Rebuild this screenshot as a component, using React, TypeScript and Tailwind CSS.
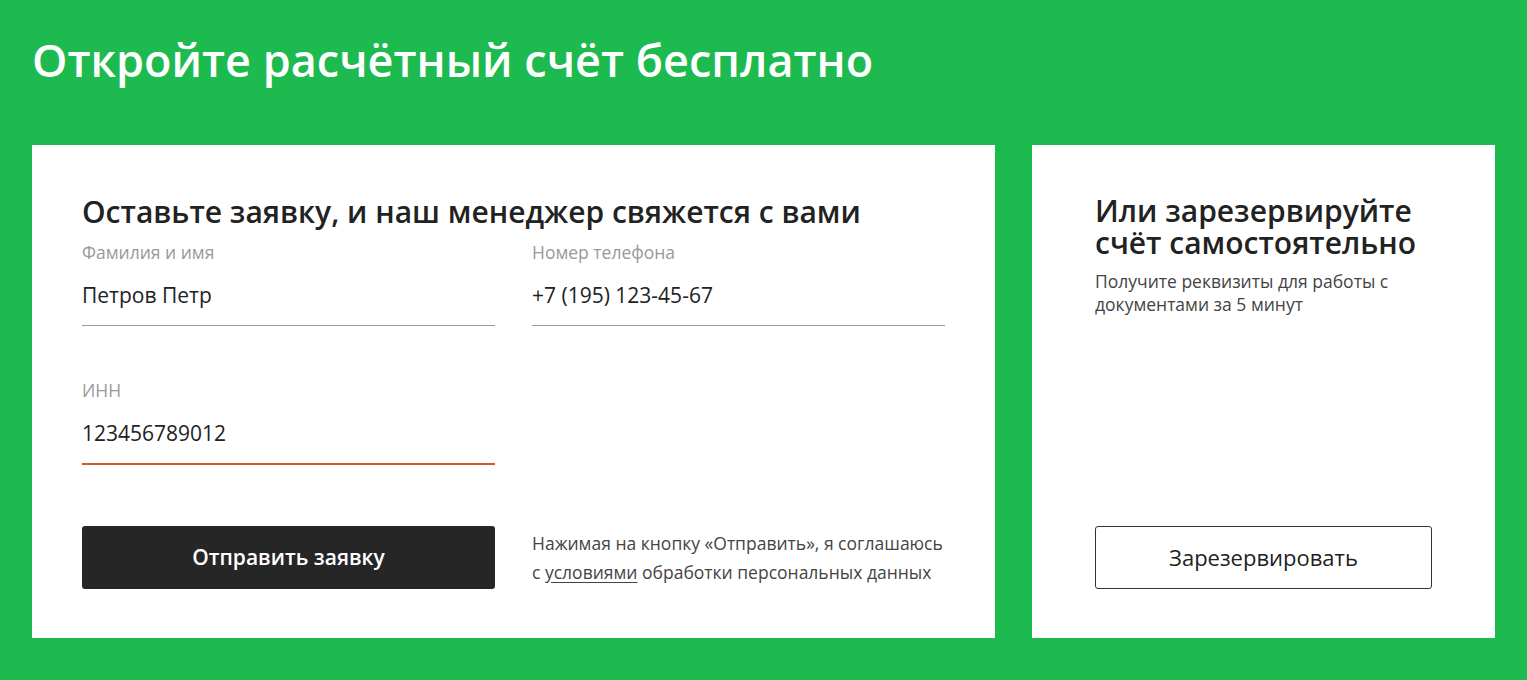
import React from "react";

export default function App() {
  return (
    <div
      className="min-h-[680px] w-full bg-[#1dba4f] px-[32px]"
      style={{ fontFamily: '"Open Sans", "Noto Sans", sans-serif' }}
    >
      <h1 className="pt-[32px] text-[45px] leading-[56px] font-semibold text-white">
        Откройте расчётный счёт бесплатно
      </h1>
      <div className="mt-[57px] flex gap-[37px]">
        <div className="w-[963px] bg-white pl-[50px] pr-[50px] pt-[49px] pb-[49px]">
          <h2 className="text-[30px] leading-[36px] font-semibold text-[#222]">
            Оставьте заявку, и наш менеджер свяжется с вами
          </h2>
          <div className="mt-[12px] grid grid-cols-[413px_413px] gap-x-[37px]">
            <div>
              <Field label="Фамилия и имя" value="Петров Петр" />
              <div className="h-px w-full bg-[#9a9a9a]" />
            </div>
            <div>
              <Field label="Номер телефона" value="+7 (195) 123-45-67" />
              <div className="h-px w-full bg-[#9a9a9a]" />
            </div>
            <div className="mt-[54px]">
              <Field label="ИНН" value="123456789012" />
              <div className="h-[2px] w-full bg-[#cf5a26]" />
            </div>
          </div>
          <div className="mt-[61px] grid grid-cols-[413px_430px] gap-x-[37px] items-center">
            <button className="h-[63px] rounded-[3px] bg-[#262626] text-white text-[21px] font-semibold">
              Отправить заявку
            </button>
            <p className="text-[17.5px] leading-[29px] text-[#444] whitespace-nowrap">
              Нажимая на кнопку «Отправить», я соглашаюсь
              <br />с <span className="underline underline-offset-[3px]">условиями</span> обработки персональных данных
            </p>
          </div>
        </div>
        <div className="flex w-[463px] flex-col bg-white pl-[63px] pr-[30px] pt-[50px] pb-[49px]">
          <h2 className="text-[30px] leading-[32px] font-semibold text-[#222]">
            Или зарезервируйте
            <br />
            счёт самостоятельно
          </h2>
          <p className="mt-[11px] text-[17.5px] leading-[23px] text-[#444]">
            Получите реквизиты для работы с
            <br />
            документами за 5 минут
          </p>
          <button className="mt-auto h-[63px] w-[337px] rounded-[3px] border border-[#333] bg-white text-[22px] font-medium text-[#222]">
            Зарезервировать
          </button>
        </div>
      </div>
    </div>
  );
}

function Field({ label, value }: { label: string; value: string }) {
  return (
    <>
      <div className="text-[17.5px] leading-[20px] text-[#999]">{label}</div>
      <div className="mt-[19px] pb-[16px] text-[21px] leading-[28px] text-[#222]">{value}</div>
    </>
  );
}
